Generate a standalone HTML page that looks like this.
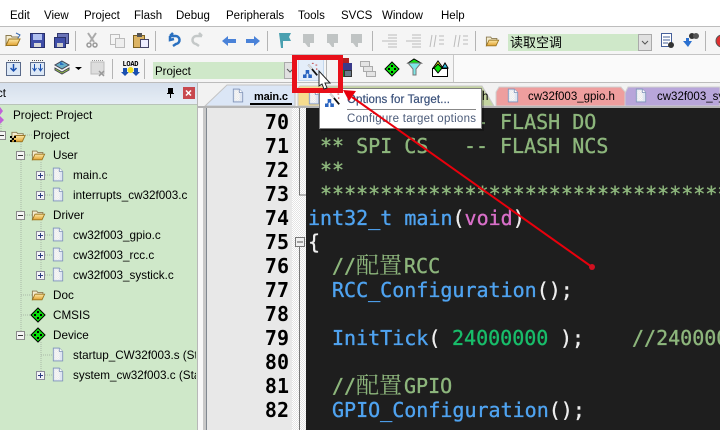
<!DOCTYPE html>
<html><head><meta charset="utf-8"><style>
html,body{margin:0;padding:0;width:720px;height:430px;overflow:hidden;background:#f5f5f5}
svg{display:block}
.m{font:11.5px "Liberation Sans",sans-serif;fill:#000}
.t{font:11.7px "Liberation Sans",sans-serif;fill:#000}
.c{font:20px "DejaVu Sans Mono","Liberation Mono",monospace;font-weight:400;stroke-width:.35px}
.n{font:bold 20px "DejaVu Sans Mono",monospace;fill:#000;text-anchor:end}
.g{fill:#8db67c;stroke:#8db67c}.b{fill:#4fa3f0;stroke:#4fa3f0}.w{fill:#eee;stroke:#eee}.k{fill:#18bd6a;stroke:#18bd6a}.p{fill:#d86fc8;stroke:#d86fc8}
.z{font-family:"Noto Serif CJK SC","WenQuanYi Zen Hei",serif;font-weight:400;font-size:23px;stroke:none}
</style></head><body>
<svg width="720" height="430" viewBox="0 0 720 430" xmlns="http://www.w3.org/2000/svg">
<defs>
<linearGradient id="fo" x1="0" y1="0" x2="0" y2="1"><stop offset="0" stop-color="#fdeaa8"/><stop offset="1" stop-color="#e0a030"/></linearGradient>
<linearGradient id="hd" x1="0" y1="0" x2="0" y2="1"><stop offset="0" stop-color="#d5dfec"/><stop offset="1" stop-color="#e6edf5"/></linearGradient>
<pattern id="chk" width="2" height="2" patternUnits="userSpaceOnUse"><rect width="2" height="2" fill="#fff"/><rect width="1" height="1" fill="#e4e4e4"/><rect x="1" y="1" width="1" height="1" fill="#e4e4e4"/></pattern>
<symbol id="fold" viewBox="0 0 16 16" overflow="visible"><path d="M1 3.500h5l1 1.500h6v2H5L1 13z" fill="#f4ecd0" stroke="#8a7a50"/><path d="M1 13.500L4 7h11l-3 6.500z" fill="url(#fo)" stroke="#9a7420"/></symbol>
<symbol id="doc" viewBox="0 0 14 16" overflow="visible"><path d="M1.500.5h7l4 4v11h-11z" fill="#dfe6f2" stroke="#7f93b8"/><rect x="3" y="2" width="6" height="12" fill="url(#chk)"/><path d="M8.500.5v4h4" fill="#fff" stroke="#7f93b8"/></symbol>
<symbol id="pl" viewBox="0 0 9 9" overflow="visible"><rect x=".5" y=".5" width="8" height="8" fill="#f4f4f8" stroke="#8a8a9a"/><path d="M2 4.500h5M4.500 2v5" stroke="#2a3a80"/></symbol>
<symbol id="mi" viewBox="0 0 9 9" overflow="visible"><rect x=".5" y=".5" width="8" height="8" fill="#f4f4f4" stroke="#8a8a8a"/><path d="M2 4.500h5" stroke="#333"/></symbol>
<symbol id="dia" viewBox="0 0 14 14" overflow="visible"><path d="M7 0l7 7-7 7-7-7z" fill="#0be00b" stroke="#000"/><path d="M6 3h2v2H6zM3 6h2v2H3zM9 6h2v2H9zM6 9h2v2H6z" fill="#000"/></symbol>
<symbol id="wand" viewBox="0 0 18 18" overflow="visible"><path d="M6 3l10 12" stroke="#111" stroke-width="2"/><path d="M6 3l4 5" stroke="#ddd" stroke-width="2"/><path d="M3 9h4v4H3zM0 14h4v4H0zM6 14h4v4H6z" fill="#2a64c0"/><path d="M5 12l-3 3M5 12l3 3" stroke="#2a64c0"/><path d="M10 1h2v1h-2zM14 3h2v1h-2zM15 7h1v2h-1z" fill="#c03030"/></symbol>
</defs>

<!-- menu -->
<rect width="720" height="26" fill="#fff"/>
<rect y="26" width="720" height="1" fill="#bdbdbd"/>
<g class="m">
<text x="10" y="19">Edit</text><text x="44" y="19">View</text><text x="84" y="19">Project</text><text x="134" y="19">Flash</text><text x="176" y="19">Debug</text><text x="226" y="19">Peripherals</text><text x="298" y="19">Tools</text><text x="341" y="19">SVCS</text><text x="382" y="19">Window</text><text x="441" y="19">Help</text>
</g>

<!-- toolbars -->
<rect y="27" width="720" height="27" fill="#f5f5f5"/>
<rect y="54" width="720" height="1" fill="#c4c4c4"/>
<rect y="55" width="453" height="27" fill="#f5f5f5"/>
<rect x="453" y="55" width="267" height="27" fill="#fafafa"/>
<rect x="453" y="55" width="1" height="27" fill="#c8c8c8"/>
<rect y="82" width="720" height="1" fill="#bcbcbc"/>
<g fill="#b4b4b4">
<rect x="75" y="31" width="1" height="20"/><rect x="155" y="31" width="1" height="20"/><rect x="267" y="31" width="1" height="20"/><rect x="372" y="31" width="1" height="20"/><rect x="475" y="31" width="1" height="20"/><rect x="705" y="31" width="1" height="20"/>
<rect x="112" y="59" width="1" height="20"/><rect x="144" y="59" width="1" height="20"/><rect x="326" y="59" width="1" height="20"/>
</g>
<use href="#fold" x="5" y="32" width="16" height="16"/>
<path d="M16 33l4 2-2 3" fill="none" stroke="#3a6ab0"/>
<g><rect x="30.500" y="33.500" width="14" height="14" fill="#3f4ea8" stroke="#28306a"/><rect x="33" y="34" width="9" height="6" fill="#b0c0f0"/><rect x="34" y="43" width="7" height="4" fill="#d8d8d8"/></g>
<rect x="57.500" y="33.500" width="11" height="10" fill="#6a74b8" stroke="#333a70"/><rect x="54.500" y="37.500" width="11" height="10" fill="#3f4ea8" stroke="#28306a"/><rect x="57" y="43" width="6" height="4" fill="#ccc"/>
<path d="M88 33l6 9M96 33l-6 9" stroke="#aaa" stroke-width="2"/><circle cx="89" cy="45" r="2" fill="none" stroke="#999" stroke-width="1.500"/><circle cx="95" cy="45" r="2" fill="none" stroke="#999" stroke-width="1.500"/>
<rect x="110.500" y="34.500" width="9" height="10" fill="#f4f4f4" stroke="#bbb"/><rect x="115.500" y="38.500" width="9" height="9" fill="#eee" stroke="#bbb"/>
<rect x="133.500" y="35.500" width="11" height="12" fill="#dcb464" stroke="#7a6020"/><rect x="137" y="33" width="5" height="4" fill="#555"/><rect x="140.500" y="39.500" width="8" height="8" fill="#eef" stroke="#446"/>
<path d="M170 36h5a4 4 0 0 1 1 8l-3 2M170 36l3-3M170 36v4l4-1" fill="none" stroke="#2a70c0" stroke-width="2.500"/>
<path d="M202 36h-5a4 4 0 0 0-1 8l3 2M202 36l-3-3" fill="none" stroke="#c4c8c8" stroke-width="2.500"/>
<path d="M222 41l6-5v3h8v4h-8v3z" fill="#4a82d8"/>
<path d="M260 41l-6-5v3h-8v4h8v3z" fill="#4a82d8"/>
<path d="M279 33h12l-2 4 2 4h-8v7h-2z" fill="#4aa0b0"/>
<g fill="#c0c4c4"><path d="M303 34h11v9h-4v4h-2l-3-4h-2z"/><path d="M327 34h11v9h-4v4h-2l-3-4h-2z"/><path d="M351 34h11v9h-4v4h-2l-3-4h-2z"/></g>
<g stroke="#bcbcbc" fill="none"><path d="M388 35h9M388 38h9M382 41h15M388 44h9M388 47h9"/><path d="M412 35h9M412 38h9M406 41h15M412 44h9M412 47h9"/><path d="M432 35l-2 12M436 35l-2 12M439 36h5M439 40h5M439 44h5"/><path d="M456 35l-2 12M460 35l-2 12M463 36h5M463 40h5M463 44h5"/></g>
<use href="#fold" x="485" y="34" width="15" height="14"/>
<rect x="508" y="34" width="130" height="17" fill="#cfe8c9"/>
<text x="510" y="47" style="font:13px 'Noto Sans CJK SC',sans-serif" fill="#000">读取空调</text>
<rect x="638.500" y="34.500" width="13" height="16" fill="#e0e0e0" stroke="#aaa"/><path d="M642 41l3 3 3-3" fill="none" stroke="#555"/>
<rect x="661.500" y="33.500" width="10" height="13" fill="#fff" stroke="#46609a"/><path d="M663 37h7M663 40h7M663 43h5" stroke="#46609a"/><circle cx="671" cy="45" r="3" fill="#333"/>
<path d="M683 41h3v-3h3v3h3l-4 6z" fill="#2a70d0"/><circle cx="692" cy="36" r="3" fill="#333"/><circle cx="696" cy="36" r="3" fill="#555"/>
<circle cx="722" cy="41" r="6" fill="#e03030" stroke="#555"/>

<rect x="6.500" y="62.500" width="14" height="13" fill="#dce8f6" stroke="#5a6a8a"/><path d="M13.500 64v6m-3-2l3 3 3-3" fill="none" stroke="#1a50b0" stroke-width="1.500"/><path d="M8 60.500h11" stroke="#555" stroke-dasharray="1 1"/>
<rect x="30.500" y="62.500" width="14" height="13" fill="#dce8f6" stroke="#5a6a8a"/><path d="M34.500 64v6m-2-2l2 3 2-3M40.500 64v6m-2-2l2 3 2-3" fill="none" stroke="#1a50b0"/><path d="M32 60.500h11" stroke="#555" stroke-dasharray="1 1"/>
<path d="M62 61l7 4-7 4-7-4z" fill="#6ab0c8" stroke="#445"/><path d="M55 68l7 4 7-4v2l-7 4-7-4z" fill="#9ed040" stroke="#445"/><path d="M60 61v4h4z" fill="#2a70c0"/>
<path d="M75 67h7l-3.500 3z" fill="#000"/>
<rect x="91" y="62" width="13" height="12" fill="#ddd" stroke="#bbb"/><path d="M99 71l5 5m0-5l-5 5" stroke="#999" stroke-width="1.500"/><path d="M92 60.500h11" stroke="#999" stroke-dasharray="1 1"/>
<text x="122.500" y="66" style="font:bold 7px 'Liberation Mono',monospace" fill="#000" textLength="16">LOAD</text>
<path d="M123 68h4v4h2l-4 4-4-4h2zM134 68h4v4h2l-4 4-4-4h2z" fill="#1a50b0"/><circle cx="130.500" cy="70" r="3" fill="#f0e020"/>
<rect x="153" y="62" width="131" height="17" fill="#cfe8c9"/>
<text x="155" y="75" class="m">Project</text>
<rect x="284.500" y="62.500" width="12" height="16" fill="#e0e0e0" stroke="#aaa"/><path d="M287 69l3 3 3-3" fill="none" stroke="#555"/>
<rect x="298.500" y="58.500" width="25" height="22" fill="#e4eefa" stroke="#c4d8ee"/>
<use href="#wand" x="303" y="62" width="16" height="16"/>
<rect x="340" y="58" width="9" height="5" fill="#b02020"/><rect x="338" y="63" width="14" height="7" fill="#3a3a8a"/><rect x="338" y="70" width="7" height="7" fill="#0a8a2a"/><rect x="344.500" y="70.500" width="7" height="6" fill="#6a7a8a" stroke="#333"/>
<g fill="#e4e4e4" stroke="#aaa"><rect x="360.500" y="61.500" width="9" height="5"/><rect x="363.500" y="66.500" width="9" height="5"/><rect x="366.500" y="71.500" width="9" height="5"/></g>
<use href="#dia" x="385" y="62" width="14" height="14"/>
<path d="M408 63l6-4 7 4z" fill="#0be00b" stroke="#000"/><path d="M408 63h13l-5 6v6h-3v-6z" fill="#7ee8e8" stroke="#777"/>
<path d="M433 68l5-7 5 7z" fill="#f0f020" stroke="#000"/><path d="M442 68l3-5 3 5z" fill="#30c0e0" stroke="#000"/><rect x="432.500" y="68.500" width="15" height="8" fill="#fff" stroke="#000"/><path d="M438 64l4 4-4 5-4-5z" fill="#0be00b" stroke="#000"/>

<!-- left panel -->
<rect y="83" width="207" height="347" fill="#f8f8f8"/>
<rect y="83" width="197" height="21" fill="url(#hd)"/>
<text x="6" y="97" class="m" text-anchor="end">ct</text>
<path d="M168 88h5v5h1v1h-7v-1h1zM170 94h1v4h-1z" fill="#000"/>
<rect x="183" y="87" width="12" height="12" fill="#c8484e"/>
<path d="M186 90.500l5 5m0-5l-5 5" stroke="#fff" stroke-width="1.500"/>
<rect y="104" width="197" height="326" fill="#cfe8c9"/>
<rect x="197" y="83" width="1" height="347" fill="#b8b8b8"/>
<rect y="104" width="197" height="1" fill="#b8c4b8"/>

<g stroke="#a8b8a8" fill="none" stroke-dasharray="1 1">
<path d="M1 120v15M21 142v195M41 162v34M41 222v54M21 135h12M21 155h12M21 215h12M21 295h12M21 315h12M21 335h12M41 175h12M41 195h12M41 235h12M41 255h12M41 275h12M41 342v34M41 355h12M41 375h12"/>
</g>
<path d="M0 107l3 4-3 4zM0 116l4 4-4 4z" fill="#c060d8"/>
<use href="#mi" x="-3" y="131" width="9" height="9"/>
<use href="#fold" x="10" y="129" width="17" height="15"/>
<path d="M10 136h2v2h-2zM14 136h2v2h-2zM12 138h2v2h-2zM10 140h2v2h-2zM14 140h2v2h-2z" fill="#000"/>
<use href="#mi" x="16" y="151" width="9" height="9"/><use href="#fold" x="31" y="148" width="15" height="14"/>
<use href="#mi" x="16" y="211" width="9" height="9"/><use href="#fold" x="31" y="208" width="15" height="14"/>
<use href="#fold" x="31" y="288" width="15" height="14"/>
<use href="#dia" x="31" y="308" width="14" height="14"/>
<use href="#mi" x="16" y="331" width="9" height="9"/><use href="#dia" x="31" y="328" width="14" height="14"/>
<g>
<use href="#pl" x="36" y="171" width="9" height="9"/><use href="#doc" x="52" y="167" width="12" height="15"/>
<use href="#pl" x="36" y="191" width="9" height="9"/><use href="#doc" x="52" y="187" width="12" height="15"/>
<use href="#pl" x="36" y="231" width="9" height="9"/><use href="#doc" x="52" y="227" width="12" height="15"/>
<use href="#pl" x="36" y="251" width="9" height="9"/><use href="#doc" x="52" y="247" width="12" height="15"/>
<use href="#pl" x="36" y="271" width="9" height="9"/><use href="#doc" x="52" y="267" width="12" height="15"/>
<use href="#doc" x="52" y="347" width="12" height="15"/>
<use href="#pl" x="36" y="371" width="9" height="9"/><use href="#doc" x="52" y="367" width="12" height="15"/>
</g>
<svg x="0" y="104" width="196" height="326" viewBox="0 104 196 326">
<g class="t">
<text x="13" y="119">Project: Project</text>
<text x="33" y="139">Project</text>
<text x="53" y="159">User</text>
<text x="73" y="179">main.c</text>
<text x="73" y="199">interrupts_cw32f003.c</text>
<text x="53" y="219">Driver</text>
<text x="73" y="239">cw32f003_gpio.c</text>
<text x="73" y="259">cw32f003_rcc.c</text>
<text x="73" y="279">cw32f003_systick.c</text>
<text x="53" y="299">Doc</text>
<text x="53" y="319">CMSIS</text>
<text x="53" y="339">Device</text>
<text x="73" y="359">startup_CW32f003.s (Startup)</text>
<text x="73" y="379">system_cw32f003.c (Startup)</text>
</g>
</svg>

<!-- tabs -->
<rect x="198" y="83" width="522" height="25" fill="#f2f2f2"/>
<path d="M322 106V86h160l12 20z" fill="#c4d4a0" stroke="#c8c8c8"/>
<path d="M298 106V88l2-2h25v20z" fill="#f6dc8e" stroke="#c8c8c8"/>
<path d="M205 106l22-21h68v21z" fill="#dbe6f6" stroke="#c4c4c4"/>
<path d="M496 106V92l3-5h122l5 6v13z" fill="#ee9e9e" stroke="#d0d0d0"/>
<path d="M625 106V93l3-6h92v19z" fill="#b8a6da" stroke="#d0d0d0"/>
<rect x="198" y="106" width="522" height="2" fill="#b4b4b4"/>
<use href="#doc" x="232" y="88" width="12" height="15"/>
<use href="#doc" x="308" y="90" width="12" height="15"/>
<use href="#doc" x="507" y="88" width="12" height="15"/>
<use href="#doc" x="635" y="88" width="12" height="15"/>
<text x="254" y="100" style="font:bold 11px 'Liberation Sans',sans-serif" fill="#000" textLength="34">main.c</text>
<rect x="250" y="103" width="42" height="2" fill="#000"/>
<text x="482" y="100" class="m">h</text>
<text x="528" y="100" class="m">cw32f003_gpio.h</text>
<text x="657" y="100" class="m">cw32f003_systick.h</text>

<!-- editor -->
<rect x="203" y="108" width="3" height="322" fill="#c8c8c8"/>
<rect x="206" y="108" width="1" height="322" fill="#808890"/>
<rect x="207" y="108" width="85" height="322" fill="#e8e8e8"/>
<rect x="292" y="108" width="14" height="322" fill="url(#chk)"/>
<rect x="306" y="108" width="414" height="322" fill="#1e1e1e"/>
<path d="M299.500 108v87H306M299.500 247v183" stroke="#777" fill="none"/>
<rect x="295.500" y="237.500" width="9" height="9" fill="#f0f0f0" stroke="#777"/><path d="M297 242h6" stroke="#555"/>
<g class="n">
<text x="289" y="129">70</text><text x="289" y="153">71</text><text x="289" y="177">72</text><text x="289" y="201">73</text><text x="289" y="225">74</text><text x="289" y="249">75</text><text x="289" y="273">76</text><text x="289" y="297">77</text><text x="289" y="321">78</text><text x="289" y="345">79</text><text x="289" y="369">80</text><text x="289" y="393">81</text><text x="289" y="417">82</text>
</g>
<g class="c">
<text y="129" class="g"><tspan x="464">--</tspan><tspan x="500">FLASH DO</tspan></text>
<text y="153" class="g"><tspan x="320">** SPI CS</tspan><tspan x="464">--</tspan><tspan x="500">FLASH NCS</tspan></text>
<text x="320" y="177" class="g">**</text>
<text x="320" y="201" class="g">*************************************</text>
<text x="308" y="225"><tspan class="b">int32_t main</tspan><tspan class="w">(</tspan><tspan class="p">void</tspan><tspan class="w">)</tspan></text>
<text x="308" y="249" class="w">{</text>
<text x="332" y="273" class="g">//<tspan class="z" x="356">配置</tspan><tspan x="404">RCC</tspan></text>
<text x="332" y="297"><tspan class="b">RCC_Configuration</tspan><tspan class="w">();</tspan></text>
<text y="345"><tspan class="b" x="332">InitTick</tspan><tspan class="w">(</tspan><tspan class="k" x="452">24000000</tspan><tspan class="w" x="560">);</tspan><tspan class="g" x="632">//24000000</tspan></text>
<text x="332" y="393" class="g">//<tspan class="z" x="356">配置</tspan><tspan x="404">GPIO</tspan></text>
<text x="332" y="417"><tspan class="b">GPIO_Configuration</tspan><tspan class="w">();</tspan></text>
</g>

<!-- tooltip -->
<rect x="321" y="90" width="163" height="41" fill="#000" opacity=".25"/>
<rect x="319.500" y="88.500" width="162" height="40" fill="#fff" stroke="#808080"/>
<use href="#wand" x="325" y="91" width="16" height="16"/>
<text x="347" y="103" style="font:11.500px 'Liberation Sans',sans-serif" fill="#39507a" stroke="#39507a" stroke-width=".2" textLength="103">Options for Target...</text>
<rect x="347" y="109" width="129" height="1" fill="#888"/>
<text x="347" y="122" style="font:11.500px 'Liberation Sans',sans-serif" fill="#4a5a78" textLength="129">Configure target options</text>

<!-- annotation -->
<path d="M592 267L352 97" stroke="#e8000c" stroke-width="2"/>
<path d="M343 90l13 1-7 10z" fill="#e8000c"/>
<circle cx="592" cy="267" r="3" fill="#d01020"/>
<rect x="294.500" y="57.500" width="46" height="33" fill="none" stroke="#e8101a" stroke-width="5"/>
<path d="M319 71v15l3-2 2 5 3-1-2-5h5z" fill="#fff" stroke="#222"/>
</svg>
</body></html>
